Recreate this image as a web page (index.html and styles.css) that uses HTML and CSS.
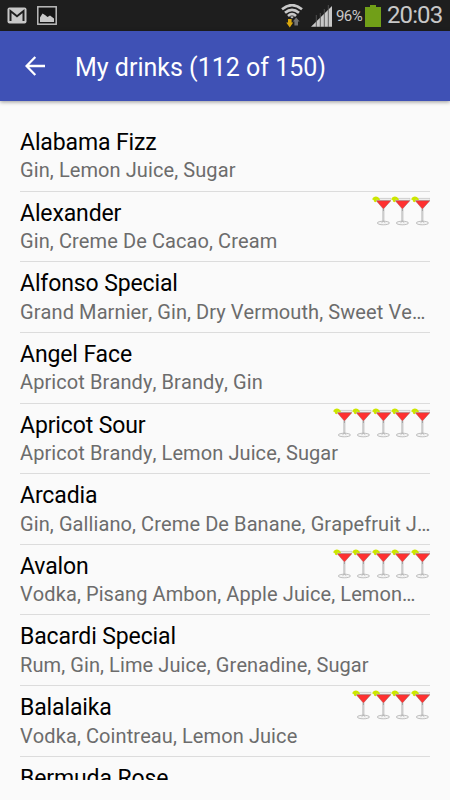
FILE: index.html
```html
<!DOCTYPE html>
<html lang="en">

<head>
    <meta charset="UTF-8">
    <meta name="viewport" content="width=device-width, initial-scale=1.0">
    <title>My drinks</title>
    <link rel="stylesheet" href="styles.css">
</head>

<body>
    <!-- Shared cocktail glass icon -->
    <svg class="defs" width="0" height="0">
        <symbol id="glass" viewBox="0 0 19.5 30">
            <path d="M3.5 2.4H19.2V4.4H4.6z" fill="#f2f2f2" stroke="#b4b4b4" stroke-width=".6" />
            <path d="M4.3 4.7H18.8L11.4 13z" fill="#ff3030" stroke="#9a5c5c" stroke-width=".5" />
            <path d="M11.4 13V26.5" stroke="#a4a4a4" stroke-width="1.7" />
            <path d="M11.4 15V25.5" stroke="#eee" stroke-width=".6" />
            <ellipse cx="11.4" cy="27" rx="6.1" ry="1.8" fill="#f4f4f4" stroke="#b0b0b0" stroke-width=".8" />
            <path d="M9.5 26.7L11.4 25.3L13.3 26.7" fill="none" stroke="#aaa" stroke-width=".7" />
            <path d="M.2 3.4C1 .6 4 0 6.2 1.2L8.2 3.6L6.4 4.2L4.8 3.4L4 6.2L2.2 5.8L1.6 4z" fill="#cce600" />
        </symbol>
    </svg>

    <!-- Status bar -->
    <div class="status-bar">
        <svg class="mail-icon" width="20" height="17" viewBox="0 0 20 17">
            <rect x=".5" y=".5" width="19" height="16" rx="2" fill="#c8c8c8" />
            <path d="M3.5 14V4L10 9.2L16.5 4V14" fill="none" stroke="#1e1e1e" stroke-width="2" />
        </svg>
        <svg class="picture-icon" width="20" height="19" viewBox="0 0 20 19">
            <rect x=".8" y=".8" width="18.4" height="17.4" fill="#161616" stroke="#bdbdbd" stroke-width="1.5" />
            <path d="M3 16V11.5L5.5 7.5L8 9L10.5 11L13 9.5L17 12.5V16z" fill="#c8c8c8" />
        </svg>
        <svg class="wifi-icon" width="22" height="24" viewBox="0 0 22 24">
            <g fill="none" stroke="#c8c8c8" stroke-width="2.7">
                <path d="M1 5.2Q11-2.8 21 5.2" />
                <path d="M4 8.8Q11 3 18 8.8" />
                <path d="M7 11.9Q11 8.4 15 11.9" />
            </g>
            <path d="M9 12.8Q11 11.6 13 12.8L11 14.4z" fill="#c8c8c8" />
            <path d="M7 15H10.6V18.5H12.2L8.8 23.4L5.2 18.5H7z" fill="#d9a70c" />
            <path d="M13.4 21.5V17.5H11.8L15.2 13.4L18.6 17.5H17V21.5z" fill="#747474" />
        </svg>
        <svg class="signal-icon" width="22" height="22" viewBox="0 0 22 22">
            <path d="M0 21.8L21 1V21.8z" fill="#c8c8c8" />
            <path d="M5.3 10V22M9.3 8V22M13.3 4V22M17.3 0V22" stroke="#555" stroke-width=".9" />
        </svg>
        <span class="percent">96%</span>
        <svg class="battery-icon" width="16" height="22" viewBox="0 0 16 22">
            <path d="M0 2H5V0H11V2H16V22H0z" fill="#719f18" />
        </svg>
        <span class="clock">20:03</span>
    </div>

    <!-- Toolbar -->
    <div class="toolbar">
        <svg class="back" width="20" height="20" viewBox="0 0 20 20">
            <path d="M20 10H2M10.3 1L1.5 10L10.3 19" fill="none" stroke="#fff" stroke-width="2.3" />
        </svg>
        <h1>My drinks (112 of 150)</h1>
    </div>

    <!-- Drinks list -->
    <ul class="drinks">
        <li class="drink">
            <h2>Alabama Fizz</h2>
            <p>Gin, Lemon Juice, Sugar</p>
        </li>
        <li class="drink">
            <h2>Alexander</h2>
            <p>Gin, Creme De Cacao, Cream</p>
            <div class="rating"><svg><use href="#glass" /></svg><svg><use href="#glass" /></svg><svg><use href="#glass" /></svg></div>
        </li>
        <li class="drink">
            <h2>Alfonso Special</h2>
            <p>Grand Marnier, Gin, Dry Vermouth, Sweet Ve…</p>
        </li>
        <li class="drink">
            <h2>Angel Face</h2>
            <p>Apricot Brandy, Brandy, Gin</p>
        </li>
        <li class="drink">
            <h2>Apricot Sour</h2>
            <p>Apricot Brandy, Lemon Juice, Sugar</p>
            <div class="rating"><svg><use href="#glass" /></svg><svg><use href="#glass" /></svg><svg><use href="#glass" /></svg><svg><use href="#glass" /></svg><svg><use href="#glass" /></svg></div>
        </li>
        <li class="drink">
            <h2>Arcadia</h2>
            <p>Gin, Galliano, Creme De Banane, Grapefruit J…</p>
        </li>
        <li class="drink">
            <h2>Avalon</h2>
            <p>Vodka, Pisang Ambon, Apple Juice, Lemon…</p>
            <div class="rating"><svg><use href="#glass" /></svg><svg><use href="#glass" /></svg><svg><use href="#glass" /></svg><svg><use href="#glass" /></svg><svg><use href="#glass" /></svg></div>
        </li>
        <li class="drink">
            <h2>Bacardi Special</h2>
            <p>Rum, Gin, Lime Juice, Grenadine, Sugar</p>
        </li>
        <li class="drink">
            <h2>Balalaika</h2>
            <p>Vodka, Cointreau, Lemon Juice</p>
            <div class="rating"><svg><use href="#glass" /></svg><svg><use href="#glass" /></svg><svg><use href="#glass" /></svg><svg><use href="#glass" /></svg></div>
        </li>
        <li class="drink">
            <h2>Bermuda Rose</h2>
        </li>
    </ul>
</body>

</html>
```

FILE: styles.css
```css
* {
    box-sizing: border-box;
}

body {
    margin: 0;
    height: 800px;
    overflow: hidden;
    display: flex;
    flex-direction: column;
    background-color: #fafafa;
    font-family: Roboto, "Liberation Sans", sans-serif;
}

h1,
h2,
p {
    margin: 0;
    font-weight: 400;
    white-space: nowrap;
}

.defs {
    position: absolute;
}

/* Status bar */
.status-bar {
    flex: none;
    height: 31px;
    display: flex;
    align-items: flex-start;
    padding-left: 7px;
    background-color: #1e1e1e;
    color: #c8c8c8;
}

.status-bar svg {
    flex: none;
}

.mail-icon {
    margin-top: 7px;
}

.picture-icon {
    margin: 6px 0 0 10px;
}

.wifi-icon {
    margin: 4px 0 0 224px;
}

.signal-icon {
    margin: 5px 0 0 8px;
}

.percent {
    width: 28px;
    margin: 6px 0 0 3px;
    font-size: 15px;
    line-height: 20px;
    letter-spacing: -0.6px;
}

.battery-icon {
    margin: 5px 0 0 1px;
}

.clock {
    margin: 1px 0 0 6px;
    font-size: 24px;
    line-height: 28px;
    letter-spacing: -0.9px;
}

/* Toolbar */
.toolbar {
    flex: none;
    height: 70px;
    display: flex;
    align-items: center;
    padding-left: 25px;
    background-color: #3f51b5;
    box-shadow: 0 1px 4px rgba(0, 0, 0, 0.4);
    color: #fff;
}

.toolbar h1 {
    margin: 3px 0 0 30px;
    font-size: 25px;
    line-height: 30px;
}

/* Drinks list */
.drinks {
    flex: none;
    height: 659px;
    margin: 20px 20px 0;
    padding: 0;
    overflow: hidden;
    list-style: none;
}

.drink {
    position: relative;
    height: 70.65px;
    padding-top: 8px;
    border-bottom: 1px solid #dcdcdc;
}

.drink h2 {
    font-size: 23px;
    line-height: 28px;
    letter-spacing: -0.12px;
    color: #000;
}

.drink p {
    padding-top: 0.4px;
    font-size: 20px;
    line-height: 27px;
    letter-spacing: 0.09px;
    font-kerning: none;
    color: #6c6c6c;
}

/* Rating sits over the right end of the row */
.rating {
    position: absolute;
    top: 4px;
    right: 0;
    display: flex;
}

.rating svg {
    width: 19.5px;
    height: 30px;
}
```
